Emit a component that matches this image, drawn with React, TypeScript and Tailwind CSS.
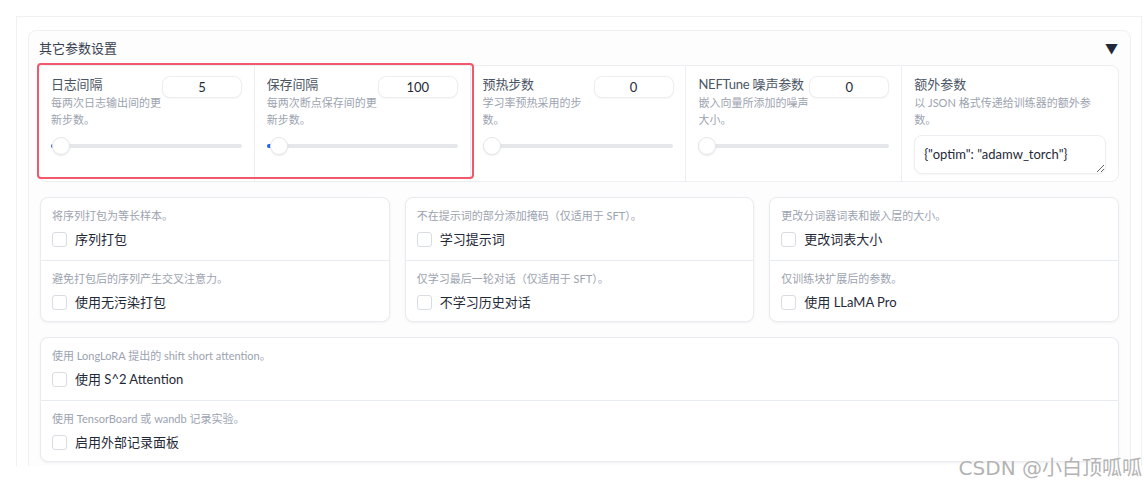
import React from "react";

const font = { fontFamily: 'Lato, "Noto Sans CJK SC", sans-serif' };

type NumberField = {
  label: string;
  info: string;
  value: string;
  fill: number;
  thumb: number;
};

const numberFields: NumberField[] = [
  { label: "日志间隔", info: "每两次日志输出间的更新步数。", value: "5", fill: 4, thumb: 1 },
  { label: "保存间隔", info: "每两次断点保存间的更新步数。", value: "100", fill: 8, thumb: 3 },
  { label: "预热步数", info: "学习率预热采用的步数。", value: "0", fill: 0, thumb: 0 },
  { label: "NEFTune 噪声参数", info: "嵌入向量所添加的噪声大小。", value: "0", fill: 0, thumb: 0 },
];

const checkCards = [
  [
    { info: "将序列打包为等长样本。", label: "序列打包" },
    { info: "避免打包后的序列产生交叉注意力。", label: "使用无污染打包" },
  ],
  [
    { info: "不在提示词的部分添加掩码（仅适用于 SFT）。", label: "学习提示词" },
    { info: "仅学习最后一轮对话（仅适用于 SFT）。", label: "不学习历史对话" },
  ],
  [
    { info: "更改分词器词表和嵌入层的大小。", label: "更改词表大小" },
    { info: "仅训练块扩展后的参数。", label: "使用 LLaMA Pro" },
  ],
];

const wideCard = [
  { info: "使用 LongLoRA 提出的 shift short attention。", label: "使用 S^2 Attention" },
  { info: "使用 TensorBoard 或 wandb 记录实验。", label: "启用外部记录面板" },
];

function Slider({ fill, thumb }: { fill: number; thumb: number }) {
  return (
    <div className="relative mt-[9px] h-[18px]">
      <div className="absolute left-0 right-0 top-[7px] h-[4px] rounded-full bg-[#e5e7eb]" />
      {fill > 0 && (
        <div
          className="absolute left-0 top-[7px] h-[4px] rounded-full bg-[#2563eb]"
          style={{ width: fill }}
        />
      )}
      <div
        className="absolute top-0 size-[18px] rounded-full border border-[#e5e7eb] bg-white shadow-[0_1px_2px_rgba(0,0,0,0.08)]"
        style={{ left: thumb }}
      />
    </div>
  );
}

function NumberColumn({ field }: { field: NumberField }) {
  return (
    <div className="flex flex-col pl-[12px] pr-[12px] pt-[9px]">
      <div className="flex items-start">
        <div className="w-[111px] flex-none">
          <div className="whitespace-nowrap text-[13px] leading-[18px] tracking-[-0.2px] text-[#4b5563]">
            {field.label}
          </div>
          <div className="mt-[1px] text-[11px] leading-[17px] text-[#9ca3af]">{field.info}</div>
        </div>
        <input
          readOnly
          value={field.value}
          className="relative ml-auto mt-[1px] h-[22px] w-[80px] shrink-0 rounded-[8px] border border-[#eceef1] bg-white text-center text-[13px] text-[#1f2937] shadow-[0_1px_2px_rgba(0,0,0,0.04)] outline-none"
          style={font}
        />
      </div>
      <Slider fill={field.fill} thumb={field.thumb} />
    </div>
  );
}

function CheckSection({ info, label, first }: { info: string; label: string; first?: boolean }) {
  return (
    <div className={`px-[11px] pt-[9px] ${first ? "h-[62px]" : "h-[61px] border-t border-[#e8ebef]"}`}>
      <div className="text-[11px] leading-[17px] text-[#9ca3af]">{info}</div>
      <label className="mt-[6px] flex items-center gap-[8px]">
        <span className="size-[15px] rounded-[3px] border border-[#d9dce1] bg-white" />
        <span className="text-[13px] leading-[18px] text-[#1f2937]">{label}</span>
      </label>
    </div>
  );
}

function CheckCard({ items }: { items: { info: string; label: string }[] }) {
  return (
    <div className="rounded-[8px] border border-[#e8ebef] bg-white shadow-[0_1px_3px_rgba(0,0,0,0.05)]">
      {items.map((it, i) => (
        <CheckSection key={it.label} info={it.info} label={it.label} first={i === 0} />
      ))}
    </div>
  );
}

export default function App() {
  return (
    <div className="relative h-[486px] w-[1146px] overflow-hidden bg-white" style={font}>
      <div className="ml-[16px] mt-[16px] h-[450px] w-[1126px] overflow-hidden border-l border-r border-t border-[#f0f1f3]">
        <div className="ml-[11px] mt-[13px] w-[1103px] rounded-[8px] border border-[#eef0f2] bg-[#fdfdfe] pb-[40px] pl-[9px] pr-[11px] pt-[8px]">
          <div className="flex h-[18px] items-center justify-between pl-[1px] pr-[1px]">
            <span className="text-[13px] leading-[18px] text-[#374151]">其它参数设置</span>
            <span className="text-[13px] leading-[18px] text-[#1f2937]">▼</span>
          </div>

          <div className="relative mt-[8px]">
            <div className="grid h-[117px] grid-cols-5 divide-x divide-[#eceef1] rounded-[8px] border border-[#eceef1] bg-white">
              {numberFields.map((f) => (
                <NumberColumn key={f.label} field={f} />
              ))}
              <div className="flex flex-col pl-[12px] pr-[12px] pt-[9px]">
                <div className="text-[13px] leading-[18px] text-[#4b5563]">额外参数</div>
                <div className="mt-[1px] text-[11px] leading-[17px] text-[#9ca3af]">
                  以 JSON 格式传递给训练器的额外参数。
                </div>
                <textarea
                  readOnly
                  defaultValue={'{"optim": "adamw_torch"}'}
                  className="mt-[7px] h-[39px] w-full rounded-[8px] border border-[#eceef1] bg-white px-[9px] py-[9px] text-[13px] leading-[18px] text-[#1f2937] shadow-[0_1px_2px_rgba(0,0,0,0.04)] outline-none"
                  style={font}
                />
              </div>
            </div>
            <div className="pointer-events-none absolute left-[-1px] top-[-2px] h-[116px] w-[437px] rounded-[4px] border-[2.5px] border-[#f2576b]" />
          </div>

          <div className="ml-[2px] mt-[15px] grid grid-cols-3 gap-[15px]">
            {checkCards.map((c, i) => (
              <CheckCard key={i} items={c} />
            ))}
          </div>

          <div className="ml-[2px] mt-[15px]">
            <CheckCard items={wideCard} />
          </div>
        </div>
      </div>

      <div
        className="absolute bottom-[6px] right-[4px] text-[20px] leading-[24px] text-[#b3b3b3] [text-shadow:0_0_2px_#fff,0_0_1px_#fff]"
        style={{ fontFamily: '"DejaVu Sans", "Noto Sans CJK SC", sans-serif' }}
      >
        CSDN @小白顶呱呱
      </div>
    </div>
  );
}
